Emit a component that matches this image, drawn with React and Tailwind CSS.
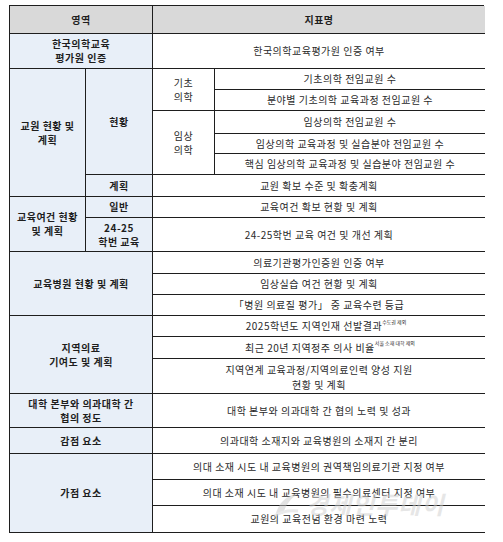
const font = {
  fontFamily: '"Noto Sans CJK KR", "Noto Sans", sans-serif',
};

function Cell({ className = '', children }) {
  return (
    <div
      className={`flex items-center justify-center text-center border-b border-[#1e1e1e] leading-[14px] ${className}`}
    >
      {children}
    </div>
  );
}

// left-side label cell (light blue, bold)
const L = 'bg-[#e8eff8] font-bold border-r';
// right-side indicator text
const R = 'text-[#2a2a2a]';

export default function App() {
  return (
    <div className="w-[503px] h-[542px] bg-white relative" style={font}>
      <div
        className="absolute left-[9px] top-[5px] w-[475px] grid border-t border-l border-[#1e1e1e] text-[10px] tracking-[0.5px] text-[#1e1e1e]"
        style={{
          gridTemplateColumns: '76px 67px 62px 270px',
          gridTemplateRows: '28px 35px 21px 21px 23px 20px 21px 22px 21px 34px 22px 21px 21px 21px 22px 35px 34px 26px 26px 26px 27px',
        }}
      >
        {/* header */}
        <Cell className="col-[1/3] row-[1] bg-[#d9d9d9] font-bold border-r">영역</Cell>
        <Cell className="col-[3/5] row-[1] bg-[#d9d9d9] font-bold">지표명</Cell>

        {/* 한국의학교육평가원 */}
        <Cell className={`col-[1/3] row-[2] ${L}`}>
          한국의학교육
          <br />
          평가원 인증
        </Cell>
        <Cell className={`col-[3/5] row-[2] ${R}`}>한국의학교육평가원 인증 여부</Cell>

        {/* 교원 현황 및 계획 */}
        <Cell className={`col-[1] row-[3/9] ${L}`}>
          교원 현황 및
          <br />
          계획
        </Cell>
        <Cell className={`col-[2] row-[3/8] ${L}`}>현황</Cell>
        <Cell className={`col-[3] row-[3/5] border-r ${R}`}>
          기초
          <br />
          의학
        </Cell>
        <Cell className={`col-[4] row-[3] ${R}`}>기초의학 전임교원 수</Cell>
        <Cell className={`col-[4] row-[4] ${R}`}>분야별 기초의학 교육과정 전임교원 수</Cell>
        <Cell className={`col-[3] row-[5/8] border-r ${R}`}>
          임상
          <br />
          의학
        </Cell>
        <Cell className={`col-[4] row-[5] ${R}`}>임상의학 전임교원 수</Cell>
        <Cell className={`col-[4] row-[6] ${R}`}>임상의학 교육과정 및 실습분야 전임교원 수</Cell>
        <Cell className={`col-[4] row-[7] ${R}`}>핵심 임상의학 교육과정 및 실습분야 전임교원 수</Cell>
        <Cell className={`col-[2] row-[8] ${L}`}>계획</Cell>
        <Cell className={`col-[3/5] row-[8] ${R}`}>교원 확보 수준 및 확충계획</Cell>

        {/* 교육여건 */}
        <Cell className={`col-[1] row-[9/11] ${L}`}>
          교육여건 현황
          <br />및 계획
        </Cell>
        <Cell className={`col-[2] row-[9] ${L}`}>일반</Cell>
        <Cell className={`col-[3/5] row-[9] ${R}`}>교육여건 확보 현황 및 계획</Cell>
        <Cell className={`col-[2] row-[10] ${L}`}>
          24-25
          <br />
          학번 교육
        </Cell>
        <Cell className={`col-[3/5] row-[10] ${R}`}>24-25학번 교육 여건 및 개선 계획</Cell>

        {/* 교육병원 */}
        <Cell className={`col-[1/3] row-[11/14] ${L}`}>교육병원 현황 및 계획</Cell>
        <Cell className={`col-[3/5] row-[11] ${R}`}>의료기관평가인증원 인증 여부</Cell>
        <Cell className={`col-[3/5] row-[12] ${R}`}>임상실습 여건 현황 및 계획</Cell>
        <Cell className={`col-[3/5] row-[13] ${R}`}>「병원 의료질 평가」 중 교육수련 등급</Cell>

        {/* 지역의료 */}
        <Cell className={`col-[1/3] row-[14/17] ${L}`}>
          지역의료
          <br />
          기여도 및 계획
        </Cell>
        <Cell className={`col-[3/5] row-[14] ${R}`}>
          <span className="pl-[14px]">
            2025학년도 지역인재 선발결과
            <sup className="text-[5px] tracking-normal align-[4px]">수도권 제외</sup>
          </span>
        </Cell>
        <Cell className={`col-[3/5] row-[15] ${R}`}>
          <span className="pl-[22px]">
            최근 20년 지역정주 의사 비율
            <sup className="text-[5px] tracking-normal align-[4px]">서울 소재 대학 제외</sup>
          </span>
        </Cell>
        <Cell className={`col-[3/5] row-[16] items-start pt-[3px] ${R}`}>
          <span className="leading-[15px]">
            지역연계 교육과정/지역의료인력 양성 지원
            <br />
            현황 및 계획
          </span>
        </Cell>

        {/* 협의 */}
        <Cell className={`col-[1/3] row-[17] ${L}`}>
          대학 본부와 의과대학 간
          <br />
          협의 정도
        </Cell>
        <Cell className={`col-[3/5] row-[17] ${R}`}>대학 본부와 의과대학 간 협의 노력 및 성과</Cell>

        {/* 감점 */}
        <Cell className={`col-[1/3] row-[18] ${L}`}>감점 요소</Cell>
        <Cell className={`col-[3/5] row-[18] ${R}`}>의과대학 소재지와 교육병원의 소재지 간 분리</Cell>

        {/* 가점 */}
        <Cell className={`col-[1/3] row-[19/22] ${L}`}>가점 요소</Cell>
        <Cell className={`col-[3/5] row-[19] ${R}`}>의대 소재 시도 내 교육병원의 권역책임의료기관 지정 여부</Cell>
        <Cell className={`col-[3/5] row-[20] ${R}`}>의대 소재 시도 내 교육병원의 필수의료센터 지정 여부</Cell>
        <Cell className={`col-[3/5] row-[21] ${R}`}>교원의 교육전념 환경 마련 노력</Cell>
      </div>

      {/* watermark */}
      <div className="absolute left-[272px] top-[486px] flex items-center gap-[4px] opacity-50 pointer-events-none">
        <svg width="30" height="30" viewBox="0 0 30 30">
          <path d="M4 24 C8 12 16 6 27 4 C19 9 14 15 11 25 Z" fill="#c8c8c8" />
          <path d="M2 27 C10 22 18 21 26 22" stroke="#d6d6d6" strokeWidth="3" fill="none" />
        </svg>
        <span className="text-[24px] font-bold italic text-[#cfcfcf] tracking-[1px]">경제인투데이</span>
      </div>
    </div>
  );
}
